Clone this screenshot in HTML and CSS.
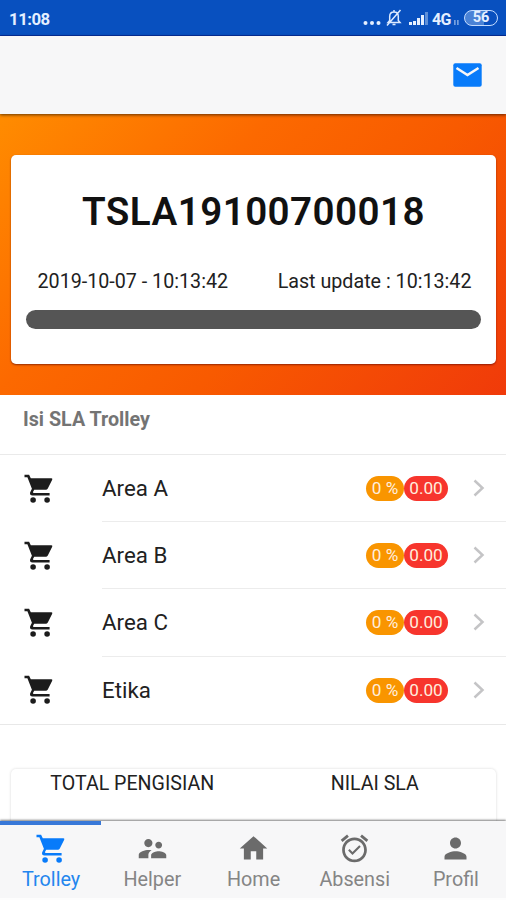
FILE: index.html
```html
<!DOCTYPE html>
<html lang="id">
<head>
<meta charset="utf-8">
<title>SLA Trolley</title>
<link rel="stylesheet" href="styles.css">
</head>
<body>
<svg class="defs" width="0" height="0">
  <symbol id="cart" viewBox="0 0 30 30"><path d="M.5.7h4.600l1.700 3.600h20.700q1.300.1.700 1.400l-4.400 8.900q-.7 1.200-2 1.200H10.200l-1.200 2.300q-.2.800.6.800h16v2.500H8.500q-3-.2-2.400-3l1.800-3.600L3.400 3.300H.5z"/><circle cx="9.100" cy="26" r="2.800"/><circle cx="23.100" cy="26" r="2.800"/></symbol>
  <symbol id="chevron" viewBox="0 0 12 18"><path d="M1.500 1.500 9.500 9l-8 7.500" fill="none" stroke="#c4c4c6" stroke-width="2.500"/></symbol>
</svg>
<div class="screen">
  <header class="status">
    <span class="clock">11:08</span>
    <div class="status-icons">
      <svg class="dots" width="18" height="4" viewBox="0 0 18 4"><circle cx="2.500" cy="2" r="2"/><circle cx="9" cy="2" r="2"/><circle cx="15.500" cy="2" r="2"/></svg>
      <svg class="bell" width="16" height="18" viewBox="0 0 16 18"><path d="M2 13.500h12l-1.700-2V7.500C12.300 4.500 10.500 3 8 3S3.700 4.500 3.700 7.500v4zM6.500 15.500h3M8 1v2M1 16.500 14.500 1" fill="none" stroke="#dceaff" stroke-width="1.500"/></svg>
      <svg class="signal" width="20" height="15" viewBox="0 0 20 15"><path d="M0 14v-3h3v3zM4 14v-4h3v4zM8 14V7h3v7zM12 14V4h3v10z"/><path d="M16 14V1h3v13z" opacity=".4"/></svg>
      <span class="net">4G</span>
      <svg class="data" width="5" height="7" viewBox="0 0 5 7"><path d="M0 1h1.700v5H0zM3 1h1.700v5H3z" opacity=".5"/></svg>
      <span class="battery">56</span>
    </div>
  </header>
  <nav class="navbar">
    <svg class="mail" width="29" height="24" viewBox="0 0 29 24"><rect x=".3" y=".3" width="28.400" height="23.400" rx="2"/><path d="m3.500 5 11 7 11-7" fill="none" stroke="#f7f7f8" stroke-width="2.600"/></svg>
  </nav>
  <main class="content">
    <section class="hero">
      <div class="card">
        <h1>TSLA19100700018</h1>
        <div class="times"><span class="created">2019-10-07 - 10:13:42</span><span class="updated">Last update : 10:13:42</span></div>
        <div class="bar"></div>
      </div>
    </section>
    <h2>Isi SLA Trolley</h2>
    <ul class="list">
      <li><svg class="cart"><use href="#cart"/></svg><div class="row"><span class="name">Area A</span><span class="badge pct">0 %</span><span class="badge val">0.00</span><svg class="chev"><use href="#chevron"/></svg></div></li>
      <li><svg class="cart"><use href="#cart"/></svg><div class="row"><span class="name">Area B</span><span class="badge pct">0 %</span><span class="badge val">0.00</span><svg class="chev"><use href="#chevron"/></svg></div></li>
      <li><svg class="cart"><use href="#cart"/></svg><div class="row"><span class="name">Area C</span><span class="badge pct">0 %</span><span class="badge val">0.00</span><svg class="chev"><use href="#chevron"/></svg></div></li>
      <li><svg class="cart"><use href="#cart"/></svg><div class="row"><span class="name">Etika</span><span class="badge pct">0 %</span><span class="badge val">0.00</span><svg class="chev"><use href="#chevron"/></svg></div></li>
    </ul>
    <div class="totals"><span>TOTAL PENGISIAN</span><span>NILAI SLA</span></div>
  </main>
  <footer class="tabbar">
    <div class="tab active"><svg class="tab-cart"><use href="#cart"/></svg><span>Trolley</span></div>
    <div class="tab"><svg viewBox="0 0 24 24"><path d="M16.500 12c1.380 0 2.490-1.120 2.490-2.500S17.880 7 16.500 7C15.120 7 14 8.120 14 9.500s1.120 2.500 2.500 2.500zM9 11c1.660 0 2.990-1.340 2.990-3S10.660 5 9 5C7.340 5 6 6.340 6 8s1.340 3 3 3zm7.500 3c-1.830 0-5.500.92-5.500 2.750V19h11v-2.250c0-1.830-3.670-2.750-5.500-2.750zM9 13c-2.330 0-7 1.170-7 3.500V19h7v-2.250c0-.85.33-2.340 2.370-3.470C10.500 13.100 9.660 13 9 13z"/></svg><span>Helper</span></div>
    <div class="tab"><svg viewBox="0 0 24 24"><path d="M10 20v-6h4v6h5v-8h3L12 3 2 12h3v8z"/></svg><span>Home</span></div>
    <div class="tab"><svg viewBox="0 0 24 24"><path d="M22 5.720l-4.600-3.860-1.290 1.530 4.600 3.860L22 5.720zM7.880 3.390L6.600 1.860 2 5.710l1.290 1.530 4.590-3.850zM12 4c-4.970 0-9 4.030-9 9s4.020 9 9 9c4.970 0 9-4.030 9-9s-4.030-9-9-9zm0 16c-3.870 0-7-3.130-7-7s3.130-7 7-7 7 3.130 7 7-3.130 7-7 7zm-1.460-5.470L8.410 12.400l-1.060 1.060 3.180 3.180 6-6-1.060-1.060-4.930 4.950z"/></svg><span>Absensi</span></div>
    <div class="tab"><svg viewBox="0 0 24 24"><path d="M12 12c2.210 0 4-1.790 4-4s-1.790-4-4-4-4 1.790-4 4 1.790 4 4 4zm0 2c-2.670 0-8 1.340-8 4v2h16v-2c0-2.660-5.330-4-8-4z"/></svg><span>Profil</span></div>
  </footer>
</div>
</body>
</html>
```
FILE: styles.css
```css
* { box-sizing: border-box; }
body { margin: 0; background: #fff; font-family: Roboto, sans-serif; color: #212121; }
.defs { position: absolute; }
.screen { display: flex; flex-direction: column; width: 506px; height: 900px; overflow: hidden; }

.status { flex: none; display: flex; align-items: center; justify-content: space-between; height: 36px; padding: 1px 8px 0 9px; background: #0850bf; border-bottom: 1px solid #062f9e; color: #e4efff; }
.clock { font-size: 16.8px; font-weight: 700; letter-spacing: -0.5px; padding-top: 1px; }
.status-icons { display: flex; align-items: center; fill: #e4efff; }
.dots { margin: 9px 5px 0 0; }
.bell { margin-right: 7px; }
.signal { margin-right: 3px; }
.net { font-size: 16px; font-weight: 700; letter-spacing: -0.5px; padding-top: 2px; }
.data { margin: 8px 5px 0 3px; }
.battery { width: 34px; height: 16px; border: 1.5px solid #c4dcff; border-radius: 8px; background: linear-gradient(90deg, #4a82d6 60%, #0850bf 60%); font-size: 14.5px; font-weight: 700; line-height: 14px; text-align: center; }

.navbar { flex: none; display: flex; align-items: center; justify-content: flex-end; height: 78px; padding-right: 24px; background: #f7f7f8; position: relative; box-shadow: 0 1px 3px rgba(0,0,0,.6); }
.mail { fill: #087bfa; }

.content { flex: 1; min-height: 0; overflow: hidden; }
.hero { height: 281px; padding: 41px 10px 0 11px; background: linear-gradient(135deg, #ff8c00 0%, #fc6900 35%, #f85a00 60%, #f03a0a 100%); }
.card { height: 209px; padding: 32px 15px 0; border-radius: 5px; background: #fff; box-shadow: 0 1px 2px rgba(80,0,0,.6); }
h1 { margin: 0; font-size: 38.6px; line-height: 50px; font-weight: 600; letter-spacing: .45px; text-align: center; color: #111; white-space: nowrap; }
.times { display: flex; justify-content: space-between; margin-top: 31px; padding: 0 9.5px 0 11.5px; font-size: 19.7px; line-height: 28px; white-space: nowrap; }
.bar { height: 19px; margin-top: 14px; border-radius: 10px; background: #555; }

h2 { margin: 0; height: 60px; padding: 10px 23px; border-bottom: 1px solid #eaeaea; font-size: 19.7px; line-height: 30px; font-weight: 700; color: #747474; }
.list { margin: 0; padding: 0; list-style: none; border-bottom: 1px solid #e8e8e8; }
.list li { display: flex; align-items: center; height: 67.2px; padding-left: 24px; }
.cart { width: 30px; height: 30px; margin-right: 48px; fill: #1c1c1c; }
.row { flex: 1; display: flex; align-items: center; height: 100%; padding-right: 21px; border-bottom: 1px solid #ececec; }
li:last-child .row { border: 0; }
.name { flex: 1; font-size: 22.3px; }
.badge { height: 25px; border-radius: 13px; color: #ffeede; font-size: 17.2px; line-height: 25px; text-align: center; white-space: nowrap; }
.pct { width: 38px; background: #f99500; }
.val { width: 44px; background: #f7352d; }
.chev { width: 12px; height: 18px; margin-left: 25px; }

.totals { display: flex; height: 80px; margin: 44px 10px 0 11px; border-radius: 5px; box-shadow: 0 0 3px rgba(0,0,0,.16); font-size: 19.6px; line-height: 30px; }
.totals span { flex: 1; text-align: center; }

.tabbar { flex: none; display: flex; height: 79px; border-bottom: 2px solid #fdfdfd; background: #f7f7f8; position: relative; box-shadow: 0 -1px 2px rgba(0,0,0,.5); }
.tab { flex: 1; display: flex; flex-direction: column; align-items: center; padding: 11px 0 0 1px; fill: #6b6b6b; color: #858585; font-size: 19.8px; line-height: 30px; }
.tab svg { width: 33px; height: 33px; }
.tab .tab-cart { width: 30px; height: 30px; margin: 2px 0 1px; }
.active { color: #2386ee; fill: #087bfa; box-shadow: inset 0 4px #3878d8; }
```
